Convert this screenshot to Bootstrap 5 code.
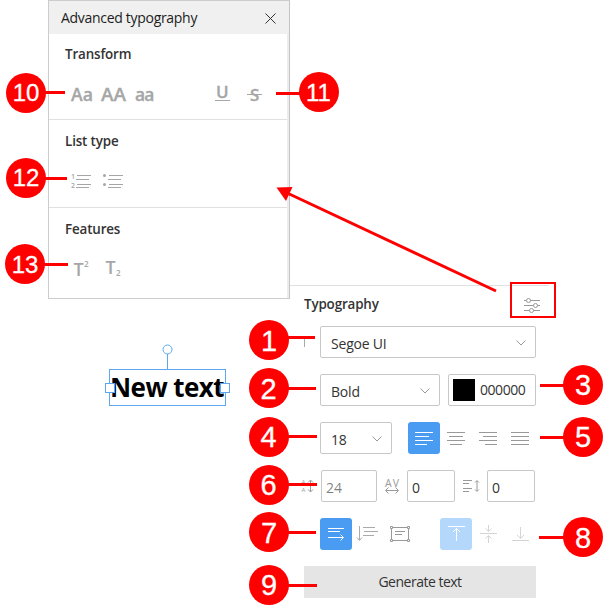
<!DOCTYPE html>
<html lang="en">
<head>
<meta charset="utf-8">
<title>Typography panel</title>
<link href="https://cdn.jsdelivr.net/npm/bootstrap@5.3.0/dist/css/bootstrap.min.css" rel="stylesheet">
<style>
body{background:#fff;font-family:"Open Sans","Noto Sans",sans-serif;font-size:14px;line-height:20px;color:#333}
.stage{width:610px;height:606px}
svg{display:block}
svg:not([fill]){fill:none}
.left-col{width:290px}
.adv{width:242px;height:299px;margin-left:48px;border:1px solid #ccc;border-right-color:#c4c4c4}
.adv-head{height:33px;background:#f0f0f0;color:#1c1c1c;padding:1px 12px 0 12px}
.adv-body{border-right:2px solid #ececec;height:264px}
.adv-sec{padding:10px 16px 0;border-bottom:1px solid #e0e0e0}
.adv-sec svg{margin-top:14px}
.sec-transform{height:86px}
.sec-list{height:88px;padding-top:11px}
.sec-features{padding-top:11px}
.title{font-weight:600;font-size:13.4px;color:#333;letter-spacing:-.15px;line-height:20px}
.hdr{letter-spacing:-.3px}
.selbox{width:117px;height:37px;margin:70px 0 0 109px;border:1px solid #5ba6f5;font-weight:700;font-size:26px;line-height:35px;color:#000;letter-spacing:-.55px;white-space:nowrap}
.knob{left:52px;top:-26px}
.hand{width:10px;height:10px;background:#fff;border:1px solid #5ba6f5;top:13px}
.hand-l{left:-5px}.hand-r{right:-5px}
.typo{width:259px;margin-top:285px;border-top:1px solid #e0e0e0;padding:8px 12px 0 14px}
.typo-head{height:32px}
.field{height:32px;border:1px solid #c8c8c8;border-radius:2px;background:#fff;font-size:14px;color:#333}
.field-text{margin-left:2px;padding-top:4px;letter-spacing:-.2px}
.field svg{position:relative;top:1px}
.ctl{margin-left:16px;height:32px}
.w216{width:216px}.w120{width:120px}.w88{width:88px}.w72{width:72px}.w56{width:56px}.w48{width:48px}
.swatch{width:22px;height:22px;background:#000;margin-left:4px}
.hex{margin-left:5px;letter-spacing:-.45px}
.tool{width:32px;height:32px;border-radius:3px}
.on{background:#4a9cf2}
.on-dim{background:#b4d8fc}
.gen{height:32px;background:#e5e5e5;width:232px;font-size:14px;color:#333;letter-spacing:-.5px}
.notes{left:0;top:0;pointer-events:none}
</style>
</head>
<body>
<main class="stage d-flex position-relative overflow-hidden">
 <div class="left-col flex-shrink-0">
  <section class="adv">
   <div class="adv-head d-flex align-items-center justify-content-between"><span class="hdr">Advanced typography</span>
    <svg width="12" height="11" stroke="#333" stroke-width="1"><path d="M.5.5l10 10M10.500.5l-10 10"/></svg></div>
   <div class="adv-body">
    <div class="adv-sec sec-transform"><div class="title">Transform</div>
     <svg width="200" height="32" viewBox="65 79 200 32" font-family="Open Sans" font-weight="600" font-size="17.500" fill="#a6a6a6" stroke="#a6a6a6" stroke-width=".3">
      <text x="71" y="101.500" textLength="22" lengthAdjust="spacingAndGlyphs">Aa</text><text x="101" y="101.500" textLength="25" lengthAdjust="spacingAndGlyphs">AA</text><text x="135" y="101.500" textLength="19.500">aa</text>
      <text x="216" y="98.500" textLength="13" font-size="17">U</text><text x="250" y="101.500" font-size="17" textLength="9">S</text>
      <path d="M215 101.500h15M247 95.500h15" stroke-width="1"/></svg></div>
    <div class="adv-sec sec-list"><div class="title">List type</div>
     <svg width="70" height="32" viewBox="65 165 70 32" stroke="#a6a6a6">
      <path d="M77 175.500h14M76 179.500h13M77 184.500h14M76 187.500h13M109 175.500h14M108 179.500h13M109 184.500h14M108 187.500h13"/>
      <g fill="#a6a6a6" stroke="none"><circle cx="104.500" cy="175.500" r="1.500"/><circle cx="104.500" cy="184.500" r="1.500"/>
      <text x="71" y="179" font-family="Open Sans" font-size="7" font-weight="600">1</text><text x="71" y="188" font-family="Open Sans" font-size="7" font-weight="600">2</text></g></svg></div>
    <div class="adv-sec sec-features border-0"><div class="title">Features</div>
     <svg width="70" height="32" viewBox="65 253 70 32" fill="#a6a6a6" font-family="Open Sans" font-size="18" font-weight="600">
      <text x="73.500" y="275.500">T</text><text x="84" y="267" font-size="8">2</text><text x="105.500" y="273.500">T</text><text x="116" y="276" font-size="8">2</text></svg></div>
   </div>
  </section>
  <div class="selbox position-relative">New text
   <svg class="position-absolute knob" width="11" height="26" stroke="#5ba6f5"><path d="M5.500 10v16"/><circle cx="5.500" cy="5.500" r="4.500" fill="#fff"/></svg>
   <span class="hand hand-l position-absolute"></span><span class="hand hand-r position-absolute"></span>
  </div>
 </div>
 <section class="typo flex-shrink-0">
  <div class="typo-head d-flex"><div class="title flex-grow-1">Typography</div>
   <svg width="18" height="32" viewBox="523 294 18 32" stroke="#999" class="me-n1 overflow-visible"><g transform="translate(4 0)"><path d="M524 300.500h16M524 305.500h16M524 310.500h16"/><g fill="#fff"><circle cx="528.500" cy="300.500" r="2"/><circle cx="535.500" cy="305.500" r="2"/><circle cx="531.500" cy="310.500" r="2"/></g></g></svg></div>
  <div class="d-flex flex-column gap-3">
   <div class="d-flex"><svg width="16" height="32" stroke="#aaa"><path d="M.5 12v9"/></svg>
    <div class="field w216 d-flex align-items-center justify-content-between px-2"><span class="field-text">Segoe UI</span><svg width="12" height="8" stroke="#999"><path d="M1.500 1.500l4.500 4.500 4.500-4.500"/></svg></div></div>
   <div class="ctl d-flex gap-2">
    <div class="field w120 d-flex align-items-center justify-content-between px-2"><span class="field-text">Bold</span><svg width="12" height="8" stroke="#999"><path d="M1.500 1.500l4.500 4.500 4.500-4.500"/></svg></div>
    <div class="field w88 d-flex align-items-center"><span class="swatch"></span><span class="hex">000000</span></div></div>
   <div class="ctl d-flex">
    <div class="field w72 d-flex align-items-center justify-content-between px-2 me-3"><span class="field-text">18</span><svg width="12" height="8" stroke="#999"><path d="M1.500 1.500l4.500 4.500 4.500-4.500"/></svg></div>
    <div class="tool on"><svg width="32" height="32" stroke="#fff"><path d="M7 10.500h18M7 14.500h14M7 18.500h18M7 22.500h12"/></svg></div>
    <svg width="32" height="32" stroke="#999"><path d="M7 10.500h18M9 14.500h14M7 18.500h18M10 22.500h12"/></svg>
    <svg width="32" height="32" stroke="#999"><path d="M7 10.500h18M11 14.500h14M7 18.500h18M13 22.500h12"/></svg>
    <svg width="32" height="32" stroke="#999"><path d="M7 10.500h18M7 14.500h18M7 18.500h18M7 22.500h18"/></svg></div>
   <div class="d-flex">
    <svg width="17" height="32" viewBox="304 470 17 32" stroke="#999" class="overflow-visible"><path d="M310.500 480.500v11M308 482.500l2.500-2.500 2.500 2.500M308 489.500l2.500 2.500 2.500-2.500"/><g fill="#999" stroke="none" font-size="6" font-family="Open Sans"><text x="301.500" y="484">A</text><text x="301.500" y="492">A</text></g></svg>
    <div class="field w56 d-flex align-items-center ps-1"><span class="pt-1 text-black-50">24</span></div>
    <svg width="30" height="32" viewBox="377 470 30 32" stroke="#999"><text x="385" y="486.500" font-size="10.500" fill="#999" stroke="none" font-family="Open Sans" textLength="14">AV</text><path d="M386 490.500h12M388.500 487.500l-3 3 3 3M395.500 487.500l3 3-3 3"/></svg>
    <div class="field w48 d-flex align-items-center ps-1"><span class="pt-1">0</span></div>
    <svg width="32" height="32" viewBox="455 470 32 32" stroke="#999"><path d="M463 480.500h9M463 483.500h6M463 488.500h9M463 491.500h6M477 481v10M475 482.500l2-2 2 2M475 489.500l2 2 2-2"/></svg>
    <div class="field w48 d-flex align-items-center ps-1"><span class="pt-1">0</span></div></div>
   <div class="ctl d-flex">
    <div class="tool on"><svg width="32" height="32" stroke="#fff"><path d="M8 10.500h16M8 13.500h12M8 19.500h15M20.500 16.500l3 3-3 3"/></svg></div>
    <svg width="32" height="32" viewBox="352 518 32 32" stroke="#aaa"><path d="M359.500 526v14M357 537.500l2.500 3 2.500-3M363 527.500h12M364 531.500h14M363 535.500h11"/></svg>
    <svg width="32" height="32" viewBox="384 518 32 32" stroke="#999"><path d="M391.500 527.500h17v13h-17zM395 531.500h10M395 534.500h7"/><g fill="#fff"><path d="M390.500 526.500h2v2h-2zM407.500 526.500h2v2h-2zM390.500 539.500h2v2h-2zM407.500 539.500h2v2h-2z"/></g></svg>
    <div class="tool on-dim ms-4"><svg width="32" height="32" stroke="#fff"><path d="M8 8.500h17M16.500 10v13M13 14l3.500-3.500L20 14"/></svg></div>
    <svg width="32" height="32" viewBox="472 518 32 32" stroke="#d4d4d4"><path d="M480 533.500h17M488.500 525v6M485.500 528.500l3 3 3-3M488.500 536v7M485.500 538.500l3-3 3 3"/></svg>
    <svg width="32" height="32" viewBox="504 518 32 32" stroke="#d4d4d4"><path d="M512 540.500h17M520.500 527v11M517 535l3.500 3.500 3.500-3.500"/></svg></div>
   <div class="gen d-flex align-items-center justify-content-center">Generate text</div>
  </div>
 </section>
 <svg class="notes position-absolute" width="610" height="606" stroke="#f00" stroke-width="3">
  <path d="M45 92.500h20M276 93.500h26M45 178.500h22M44 264.500h24M288 337.500h27M288 388.500h28M540 385.500h25M288 436.500h29M540 437.500h25M288 484.500h29M288 532.500h28M539 537.500h26M288 585.500h29M284 191.500L496 291"/>
  <path d="M276.500 187.500l16-.5-6.500 14z" fill="#f00" stroke="none"/>
  <rect x="511" y="283" width="44" height="34" stroke-width="2"/>
  <g fill="#f00" stroke="none"><circle cx="26" cy="93" r="20"/><circle cx="319" cy="92" r="20"/><circle cx="26" cy="178" r="20"/><circle cx="25" cy="264" r="20"/><circle cx="269" cy="340" r="20"/><circle cx="269" cy="388" r="20"/><circle cx="583" cy="385" r="20"/><circle cx="269" cy="437" r="20"/><circle cx="583" cy="437" r="20"/><circle cx="269" cy="485" r="20"/><circle cx="269" cy="532" r="20"/><circle cx="583" cy="537" r="20"/><circle cx="269" cy="585" r="20"/></g>
  <g fill="#fff" stroke="#fff" stroke-width=".3" text-anchor="middle" font-family="Liberation Sans" font-size="24"><text x="26" y="101">10</text><text x="318.500" y="101">11</text><text x="26" y="186">12</text><text x="25" y="272.500">13</text>
  <g font-size="29"><text x="269" y="351">1</text><text x="268.500" y="399">2</text><text x="583" y="395">3</text><text x="268.500" y="447">4</text><text x="583" y="447">5</text><text x="268.500" y="495">6</text><text x="269" y="543">7</text><text x="583" y="547.500">8</text><text x="269" y="595">9</text></g></g>
 </svg>
</main>
<script src="https://cdn.jsdelivr.net/npm/bootstrap@5.3.0/dist/js/bootstrap.bundle.min.js"></script>
</body>
</html>
